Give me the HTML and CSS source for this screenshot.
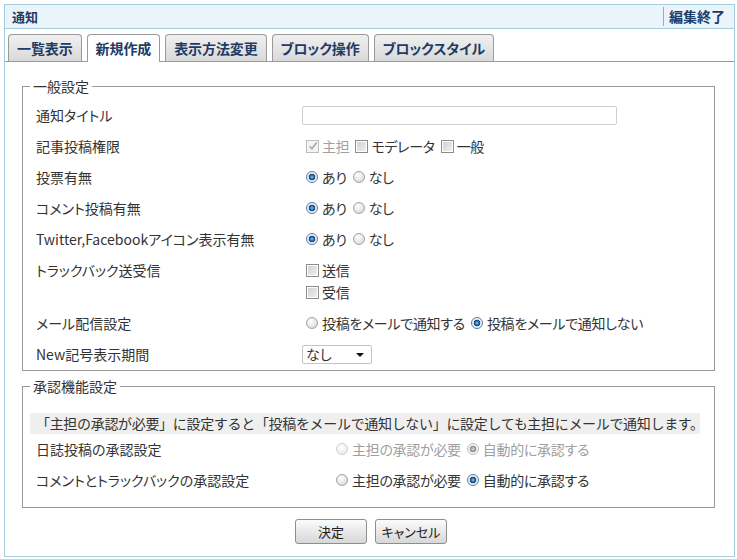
FILE: index.html
```html
<!DOCTYPE html>
<html lang="ja">
<head>
<meta charset="utf-8">
<title>通知</title>
<link rel="stylesheet" href="styles.css">
</head>
<body>
<div class="frame">
  <div class="head">
    <span class="title">通知</span>
    <span class="edit">編集終了</span>
  </div>
  <div class="tabs">
    <span class="tab">一覧表示</span>
    <span class="tab active">新規作成</span>
    <span class="tab">表示方法変更</span>
    <span class="tab">ブロック操作</span>
    <span class="tab">ブロックスタイル</span>
  </div>
  <div class="content">
    <fieldset class="group general">
      <legend>一般設定</legend>
      <div class="row"><div class="label">通知タイトル</div><div class="field"><input class="text" type="text"></div></div>
      <div class="row"><div class="label">記事投稿権限</div><div class="field">
        <span class="opt disabled"><span class="cb checked"><svg viewBox="0 0 10 10" width="10" height="10"><path d="M1.5 5.2 L4 7.8 L8.6 1.6" fill="none" stroke="#a8a8a8" stroke-width="1.6"/></svg></span>主担</span>
        <span class="opt"><span class="cb"></span>モデレータ</span>
        <span class="opt"><span class="cb"></span>一般</span>
      </div></div>
      <div class="row"><div class="label">投票有無</div><div class="field">
        <span class="opt"><span class="rd on"></span>あり</span>
        <span class="opt"><span class="rd"></span>なし</span>
      </div></div>
      <div class="row"><div class="label">コメント投稿有無</div><div class="field">
        <span class="opt"><span class="rd on"></span>あり</span>
        <span class="opt"><span class="rd"></span>なし</span>
      </div></div>
      <div class="row"><div class="label">Twitter,Facebookアイコン表示有無</div><div class="field">
        <span class="opt"><span class="rd on"></span>あり</span>
        <span class="opt"><span class="rd"></span>なし</span>
      </div></div>
      <div class="row"><div class="label">トラックバック送受信</div><div class="field stack">
        <span class="opt"><span class="cb"></span>送信</span>
        <span class="opt"><span class="cb"></span>受信</span>
      </div></div>
      <div class="row"><div class="label">メール配信設定</div><div class="field">
        <span class="opt"><span class="rd"></span>投稿をメールで通知する</span>
        <span class="opt"><span class="rd on"></span>投稿をメールで通知しない</span>
      </div></div>
      <div class="row"><div class="label">New記号表示期間</div><div class="field">
        <span class="select">なし<span class="arrow"></span></span>
      </div></div>
    </fieldset>
    <fieldset class="group approve">
      <legend>承認機能設定</legend>
      <div class="notice">「主担の承認が必要」に設定すると「投稿をメールで通知しない」に設定しても主担にメールで通知します。</div>
      <div class="row"><div class="label">日誌投稿の承認設定</div><div class="field">
        <span class="opt disabled"><span class="rd"></span>主担の承認が必要</span>
        <span class="opt disabled"><span class="rd on"></span>自動的に承認する</span>
      </div></div>
      <div class="row"><div class="label">コメントとトラックバックの承認設定</div><div class="field">
        <span class="opt"><span class="rd"></span>主担の承認が必要</span>
        <span class="opt"><span class="rd on"></span>自動的に承認する</span>
      </div></div>
    </fieldset>
    <div class="buttons">
      <button class="btn" type="button">決定</button>
      <button class="btn" type="button">キャンセル</button>
    </div>
  </div>
</div>
</body>
</html>
```
FILE: styles.css
```css
html, body {
  margin: 0;
  padding: 0;
  background: #fff;
}
body {
  font-family: "Noto Sans CJK JP", "Liberation Sans", sans-serif;
  font-size: 14px;
  color: #333;
  font-feature-settings: "palt";
}
.frame {
  margin: 4px 2px 0 4px;
  height: 553px;
  box-sizing: border-box;
  border: 1px solid #a6cddb;
}
.head {
  height: 23px;
  border-bottom: 1px solid #a6cddb;
  background: #eaf4fb;
  display: flex;
  align-items: center;
  justify-content: space-between;
  padding-left: 7px;
}
.title {
  font-weight: bold;
  font-size: 13px;
  color: #1d3b66;
  line-height: 16px;
}
.edit {
  font-weight: bold;
  font-size: 14px;
  color: #1d3b66;
  border-left: 1px solid #86b3c8;
  padding: 0 9px 0 5px;
  line-height: 19px;
}
.tabs {
  display: flex;
  align-items: flex-end;
  gap: 5px;
  padding: 5px 0 0 3px;
  border-bottom: 1px solid #9a9a9a;
  height: 27px;
}
.tab {
  height: 26px;
  line-height: 26px;
  border: 1px solid #9a9a9a;
  border-bottom: none;
  border-radius: 4px 4px 0 0;
  background: linear-gradient(#f0f0f0, #d9d9d9);
  padding: 0 8px;
  font-weight: bold;
  font-size: 14px;
  letter-spacing: -0.1px;
  color: #1d3b66;
}
.tab.active {
  background: #fff;
  height: 27px;
  margin-bottom: -1px;
}
.content {
  padding: 0 19px 0 17px;
}
.group {
  border: 1px solid #9a9a9a;
  margin: 0;
  padding: 4px 14px 0 7px;
  min-width: 0;
}
.general {
  margin-top: 14px;
}
.approve {
  margin-top: 5px;
  padding-bottom: 11px;
}
.group legend {
  padding: 0 3px;
  line-height: 20px;
  color: #333;
}
.row {
  display: flex;
  align-items: flex-start;
  padding: 4px 0 5px 6px;
  min-height: 22px;
}
.label {
  width: 266px;
  flex: none;
  line-height: 22px;
}
.approve .label {
  width: 296px;
}
.field {
  display: flex;
  align-items: center;
  flex-wrap: wrap;
  line-height: 22px;
  min-height: 22px;
}
.field.stack {
  flex-direction: column;
  align-items: flex-start;
}
.text {
  width: 315px;
  height: 19px;
  box-sizing: border-box;
  border: 1px solid #cfcfcf;
  border-radius: 2px;
  margin: 0;
  padding: 0 3px;
  font: inherit;
}
.opt {
  display: inline-flex;
  align-items: center;
  margin-right: 2px;
  white-space: nowrap;
  letter-spacing: -0.3px;
}
.opt.disabled {
  color: #a0a0a0;
}
.cb {
  width: 11px;
  height: 11px;
  border: 1px solid #8c8c8c;
  background: linear-gradient(135deg, #cfcfcf, #f2f2f2);
  box-shadow: inset 0 0 0 1px #fff;
  margin: 0 3px 0 4px;
  flex: none;
  display: inline-flex;
  align-items: center;
  justify-content: center;
}
.cb.checked {
  border-color: #bdbdbd;
  background: #f4f4f4;
  box-shadow: none;
}
.rd {
  width: 12px;
  height: 12px;
  box-sizing: border-box;
  border: 1px solid #a3a3a3;
  border-radius: 50%;
  background: radial-gradient(circle at 40% 35%, #ffffff 0, #e8e8e8 50%, #cfcfcf 100%);
  margin: 0 4px 0 4px;
  flex: none;
}
.rd.on {
  border-color: #5a7a98;
  background: radial-gradient(circle at 50% 50%, #8fd0f5 0, #2d7fc4 1.6px, #173f73 3px, #dfe6ee 3.6px, #ffffff 5.5px);
}
.opt.disabled .rd {
  border-color: #cfcfcf;
  background: radial-gradient(circle at 40% 35%, #ffffff 0, #f0f0f0 60%, #e2e2e2 100%);
}
.opt.disabled .rd.on {
  border-color: #bdbdbd;
  background: radial-gradient(circle at 50% 50%, #d4d4d4 0, #9c9c9c 2.4px, #8a8a8a 3px, #eeeeee 3.6px, #ffffff 5.5px);
}
.select {
  position: relative;
  display: inline-block;
  width: 70px;
  height: 19px;
  box-sizing: border-box;
  border: 1px solid #c4c4c4;
  border-radius: 2px;
  line-height: 17px;
  padding-left: 3px;
  background: #fff;
  margin-top: 1px;
}
.arrow {
  position: absolute;
  right: 7px;
  top: 7px;
  width: 0;
  height: 0;
  border-left: 4px solid transparent;
  border-right: 4px solid transparent;
  border-top: 4px solid #111;
}
.notice {
  margin-top: 13px;
  margin-bottom: 0;
  background: #efefef;
  line-height: 21px;
  padding-left: 6px;
  font-feature-settings: normal;
  letter-spacing: -0.32px;
  white-space: nowrap;
}
.buttons {
  display: flex;
  justify-content: center;
  gap: 8px;
  margin-top: 11px;
  padding-left: 5px;
}
.btn {
  width: 72px;
  height: 25px;
  border: 1px solid #8e8e8e;
  border-radius: 3px;
  background: linear-gradient(#fbfbfb, #e9e9e9 50%, #d8d8d8);
  font: inherit;
  font-size: 13px;
  color: #222;
  padding: 0;
  line-height: 23px;
}
```
